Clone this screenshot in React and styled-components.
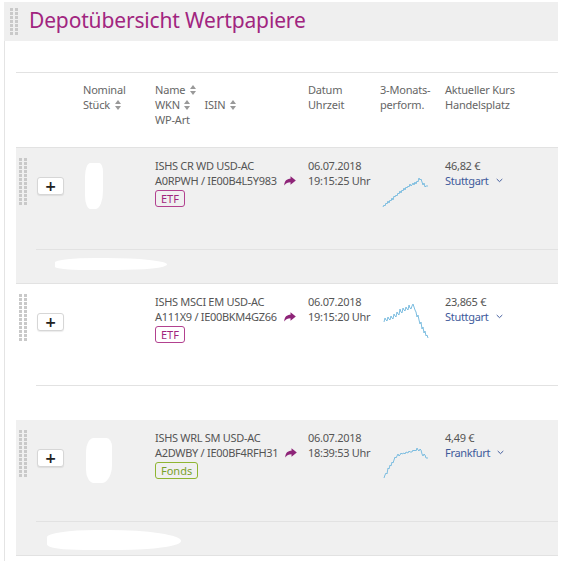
import React from 'react'
import styled, {createGlobalStyle} from 'styled-components'

const GlobalStyle = createGlobalStyle`
  body {
    margin: 0;
    background: #fff;
    font-family: "Noto Sans", "Open Sans", sans-serif;
    color: #555;
  }
`;

const rows = [
  {
    name: 'ISHS CR WD USD-AC',
    ids: 'A0RPWH / IE00B4L5Y983',
    type: 'ETF',
    date: '06.07.2018',
    time: '19:15:25 Uhr',
    price: '46,82 €',
    place: 'Stuttgart',
    shade: true,
    spark: '3,44 4,42 5,43 6,40 7,41 8,38 9,40 10,37 11,38 12,35 13,37 14,33 15,34 16,32 17,33 18,30 19,31 20,28 21,30 22,27 23,28 24,25 25,27 26,24 27,25 28,23 29,24 30,21 31,23 32,22 33,20 34,22 35,19 36,21 37,18 38,19 39,15 40,17 41,16 42,19 43,22 44,20 45,24 46,23 48,23',
    blobShape: {top: 5, left: 2, width: 18, height: 46},
    footBlob: {left: 19, width: 112, height: 12},
  },
  {
    name: 'ISHS MSCI EM USD-AC',
    ids: 'A111X9 / IE00BKM4GZ66',
    type: 'ETF',
    date: '06.07.2018',
    time: '19:15:20 Uhr',
    price: '23,865 €',
    place: 'Stuttgart',
    shade: false,
    spark: '4,23 5,19 6,21 7,22 8,18 9,20 10,21 11,17 12,19 13,20 14,15 15,17 16,18 17,13 18,15 19,16 20,10 21,13 22,14 23,9 24,11 25,12 26,8 27,10 28,11 29,6 30,9 31,10 32,7 33,5 34,8 35,11 36,13 37,18 38,16 39,21 40,25 41,23 42,30 43,28 44,34 45,32 46,37 47,36 48,39',
  },
  {
    name: 'ISHS WRL SM USD-AC',
    ids: 'A2DWBY / IE00BF4RFH31',
    type: 'Fonds',
    date: '06.07.2018',
    time: '18:39:53 Uhr',
    price: '4,49 €',
    place: 'Frankfurt',
    shade: true,
    spark: '4,43 5,40 6,38 7,39 8,33 9,34 10,30 11,31 12,27 13,28 14,25 15,22 16,23 17,21 18,19 19,21 20,20 21,18 22,19 24,18 25,19 26,17 28,18 29,16 30,17 32,17 33,15 34,16 35,15 36,16 37,13 38,15 39,16 40,14 41,15 42,19 43,21 44,19 45,20 46,23 48,23',
    blobShape: {top: 8, left: 3, width: 26, height: 45},
    footBlob: {left: 11, width: 134, height: 20},
  },
];

const SortIcon = () => (
  <SortSvg viewBox="0 0 6 10" width="6" height="10">
    <path d="M3 0 L6 4 H0 Z M0 6 H6 L3 10 Z" fill="#999" />
  </SortSvg>
);

const ShareIcon = () => (
  <svg viewBox="0 0 14 11" width="12" height="10">
    <path d="M0.3 10.8 C0.5 5.2 3.3 3 7.6 2.9 L7.6 0 L13.8 5 L7.6 10 L7.6 7 C4.4 7 2.2 8 0.3 10.8 Z" fill="#8e2478" />
  </svg>
);

const Chevron = () => (
  <svg viewBox="0 0 8 5" width="7" height="5">
    <path d="M0.8 0.8 L4 3.8 L7.2 0.8" stroke="#3e5a9b" strokeWidth="1.1" fill="none" />
  </svg>
);

const Handle = ({rows: n}) => (
  <Dots $rows={n}>
    {Array.from({length: n * 2}).map((_, i) => <Dot key={i} />)}
  </Dots>
);

const Row = ({r}) => (
  <RowWrap $shade={r.shade}>
    <RowTop>
      <HandleCell><Handle rows={12} /></HandleCell>
      <ButtonCell><PlusButton>+</PlusButton></ButtonCell>
      <NominalCell>{r.blobShape && <Blob style={r.blobShape} />}</NominalCell>
      <Cell>
        <Line>{r.name}</Line>
        <Line>{r.ids}<ShareGap><ShareIcon /></ShareGap></Line>
        <Badge $fonds={r.type === 'Fonds'}>{r.type}</Badge>
      </Cell>
      <Cell>
        <Line>{r.date}</Line>
        <Line>{r.time}</Line>
      </Cell>
      <SparkCell>
        <svg width="55" height="46" viewBox="0 0 55 46">
          <polyline points={r.spark} fill="none" stroke="#7cbde0" strokeWidth="1" />
        </svg>
      </SparkCell>
      <Cell>
        <Line>{r.price}</Line>
        <PlaceLink>{r.place}<Chevron /></PlaceLink>
      </Cell>
    </RowTop>
    <RowFoot>{r.footBlob && <FootBlob style={r.footBlob} />}</RowFoot>
  </RowWrap>
);

export default function App() {
  return (
    <>
      <GlobalStyle />
      <Panel>
        <Header>
          <HeadHandle><Handle rows={7} /></HeadHandle>
          <Title>Depotübersicht Wertpapiere</Title>
        </Header>
        <Body>
          <ColHead>
            <div />
            <div />
            <HeadCell>
              <div>Nominal</div>
              <div>Stück <SortIcon /></div>
            </HeadCell>
            <HeadCell>
              <div>Name <SortIcon /></div>
              <div>WKN <SortIcon /><IsinGap>ISIN <SortIcon /></IsinGap></div>
              <div>WP-Art</div>
            </HeadCell>
            <HeadCell>
              <div>Datum</div>
              <div>Uhrzeit</div>
            </HeadCell>
            <HeadCell>
              <div>3-Monats-</div>
              <div>perform.</div>
            </HeadCell>
            <HeadCell>
              <div>Aktueller Kurs</div>
              <div>Handelsplatz</div>
            </HeadCell>
          </ColHead>
          {rows.map((r, i) => <Row key={i} r={r} />)}
        </Body>
      </Panel>
    </>
  );
}

const Panel = styled.div`
  margin: 2px 0 0 4px;
  width: 553px;
  border-left: 1px solid #e4e4e4;
  min-height: 559px;
`;

const Header = styled.div`
  display: flex;
  align-items: center;
  height: 39px;
  background: #efefef;
  margin-left: -1px;
`;

const HeadHandle = styled.div`
  padding: 0 0 0 6px;
  display: flex;
  align-items: center;
`;

const Title = styled.h1`
  margin: 0 0 0 11px;
  font-size: 21px;
  font-weight: 400;
  color: #a1257f;
  letter-spacing: -0.15px;
  line-height: 1;
  padding-bottom: 2px;
`;

const Body = styled.div`
  padding: 31px 0 0 11px;
`;

const cols = `21px 46px 72px 153px 72px 65px 1fr`;

const ColHead = styled.div`
  display: grid;
  grid-template-columns: ${cols};
  border-top: 1px solid #e2e2e2;
  border-bottom: 1px solid #e2e2e2;
  height: 76px;
  padding-top: 9px;
  box-sizing: border-box;
`;

const HeadCell = styled.div`
  font-size: 11px;
  line-height: 15px;
  color: #666;
  letter-spacing: -0.2px;
`;

const IsinGap = styled.span`
  margin-left: 14px;
`;

const SortSvg = styled.svg`
  vertical-align: -1px;
  margin-left: 2px;
`;

const RowWrap = styled.div`
  background: ${p => (p.$shade ? '#f0f0f0' : '#fff')};
  border-bottom: 1px solid ${p => (p.$shade ? '#e2e2e2' : 'transparent')};
`;

const RowTop = styled.div`
  display: grid;
  grid-template-columns: ${cols};
  height: 101px;
  padding-top: 10px;
  box-sizing: border-box;
`;

const RowFoot = styled.div`
  position: relative;
  margin-left: 20px;
  border-top: 1px solid #e2e2e2;
  height: 33px;
`;

const FootBlob = styled.div`
  position: absolute;
  top: 8px;
  background: #fff;
  border-radius: 40% 60% 50% 30%;
`;

const HandleCell = styled.div`
  padding-left: 3px;
`;

const Dots = styled.div`
  display: grid;
  grid-template-columns: 3px 3px;
  grid-template-rows: repeat(${p => p.$rows}, 3px);
  gap: 1px 2px;
`;

const Dot = styled.span`
  background: #c9c9c9;
  display: block;
`;

const ButtonCell = styled.div`
  padding-top: 19px;
`;

const PlusButton = styled.div`
  width: 25px;
  height: 16px;
  background: #fff;
  border: 1px solid #d6d6d6;
  border-radius: 3px;
  box-shadow: 0 1px 1px rgba(0, 0, 0, 0.08);
  display: flex;
  align-items: center;
  justify-content: center;
  font-family: "DejaVu Sans", sans-serif;
  font-weight: 700;
  font-size: 14px;
  color: #222;
  line-height: 1;
`;

const NominalCell = styled.div`
  position: relative;
`;

const Blob = styled.div`
  position: absolute;
  background: #fff;
  border-radius: 30% 20% 40% 30%;
`;

const Cell = styled.div`
  font-size: 11px;
  line-height: 15px;
  color: #555;
  letter-spacing: -0.3px;
`;

const Line = styled.div`
  white-space: nowrap;
  display: flex;
  align-items: center;
`;

const ShareGap = styled.span`
  margin-left: 7px;
  display: inline-flex;
`;

const Badge = styled.span`
  display: inline-block;
  margin-top: 2px;
  padding: 0 5px;
  line-height: 15px;
  border: 1px solid ${p => (p.$fonds ? '#8fb531' : '#b2418f')};
  color: ${p => (p.$fonds ? '#7aa12a' : '#a1257f')};
  border-radius: 3px;
  font-size: 11px;
  letter-spacing: 0;
`;

const SparkCell = styled.div`
  margin-top: 5px;
`;

const PlaceLink = styled.div`
  color: #3e5a9b;
  display: flex;
  align-items: center;
  gap: 7px;
`;
